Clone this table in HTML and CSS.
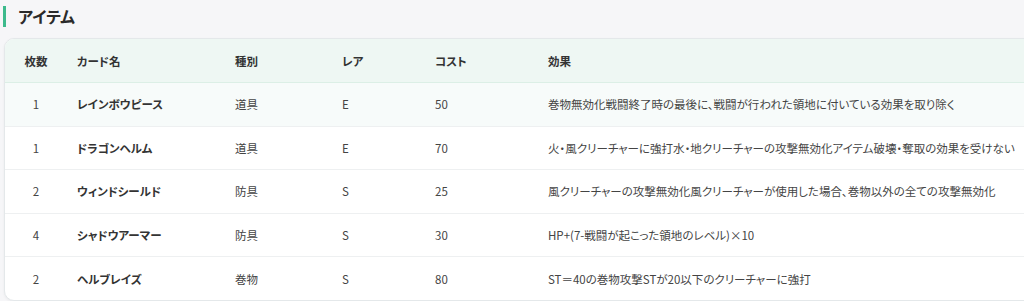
FILE: index.html
```html
<!DOCTYPE html>
<html lang="ja">
<head>
<meta charset="utf-8">
<link rel="stylesheet" href="styles.css">
</head>
<body>
<div class="page">
  <h2 class="section-title">アイテム</h2>
  <div class="card">
    <table class="items">
      <colgroup>
        <col class="c-num"><col class="c-name"><col class="c-type"><col class="c-rare"><col class="c-cost"><col>
      </colgroup>
      <thead>
        <tr><th class="center">枚数</th><th>カード名</th><th>種別</th><th>レア</th><th>コスト</th><th>効果</th></tr>
      </thead>
      <tbody>
        <tr class="hl"><td class="center">1</td><td class="name">レインボウピース</td><td>道具</td><td>E</td><td>50</td><td>巻物無効化戦闘終了時の最後に、戦闘が行われた領地に付いている効果を取り除く</td></tr>
        <tr><td class="center">1</td><td class="name">ドラゴンヘルム</td><td>道具</td><td>E</td><td>70</td><td>火・風クリーチャーに強打水・地クリーチャーの攻撃無効化アイテム破壊・奪取の効果を受けない</td></tr>
        <tr><td class="center">2</td><td class="name">ウィンドシールド</td><td>防具</td><td>S</td><td>25</td><td>風クリーチャーの攻撃無効化風クリーチャーが使用した場合、巻物以外の全ての攻撃無効化</td></tr>
        <tr><td class="center">4</td><td class="name">シャドウアーマー</td><td>防具</td><td>S</td><td>30</td><td>HP+(7-戦闘が起こった領地のレベル)×10</td></tr>
        <tr><td class="center">2</td><td class="name">ヘルブレイズ</td><td>巻物</td><td>S</td><td>80</td><td>ST＝40の巻物攻撃STが20以下のクリーチャーに強打</td></tr>
      </tbody>
    </table>
  </div>
</div>
</body>
</html>
```

FILE: styles.css
```css
html, body {
  margin: 0;
  padding: 0;
  background: #f6f6f8;
  overflow: hidden;
}
body {
  font-family: "Noto Sans CJK JP", "Noto Sans", sans-serif;
  color: #3a3a3a;
  font-feature-settings: "palt";
}
.page {
  padding: 6px 0 0 3px;
}
.section-title {
  margin: 0;
  border-left: 3px solid #3dba8c;
  padding-left: 12px;
  font-size: 16px;
  font-weight: 700;
  line-height: 21px;
  color: #2a2a2a;
}
.card {
  margin: 11px 0 0 1px;
  width: 1060px;
  background: #fff;
  border: 1px solid #e4e8ea;
  border-radius: 10px;
  overflow: hidden;
  box-shadow: 0 1px 3px rgba(0,0,0,0.05);
}
.items {
  border-collapse: collapse;
  width: 100%;
  table-layout: fixed;
  font-size: 11.5px;
}
.c-num { width: 62px; }
.c-name { width: 158px; }
.c-type { width: 107px; }
.c-rare { width: 93px; }
.c-cost { width: 113px; }
.items th {
  background: #eef7f3;
  text-align: left;
  font-weight: 700;
  color: #333;
  height: 43px;
  padding: 0 0 0 10px;
  border-bottom: 1px solid #dcefe6;
}
.items td {
  height: 42.6px;
  padding: 0 0 0 10px;
  border-bottom: 1px solid #eef0f1;
  color: #444;
  white-space: nowrap;
}
.items tr:last-child td { border-bottom: none; }
.items .center { text-align: center; padding: 0; }
.items td.name { font-weight: 700; color: #333; }
.items tr.hl td { background: #f7fbfa; }
```
